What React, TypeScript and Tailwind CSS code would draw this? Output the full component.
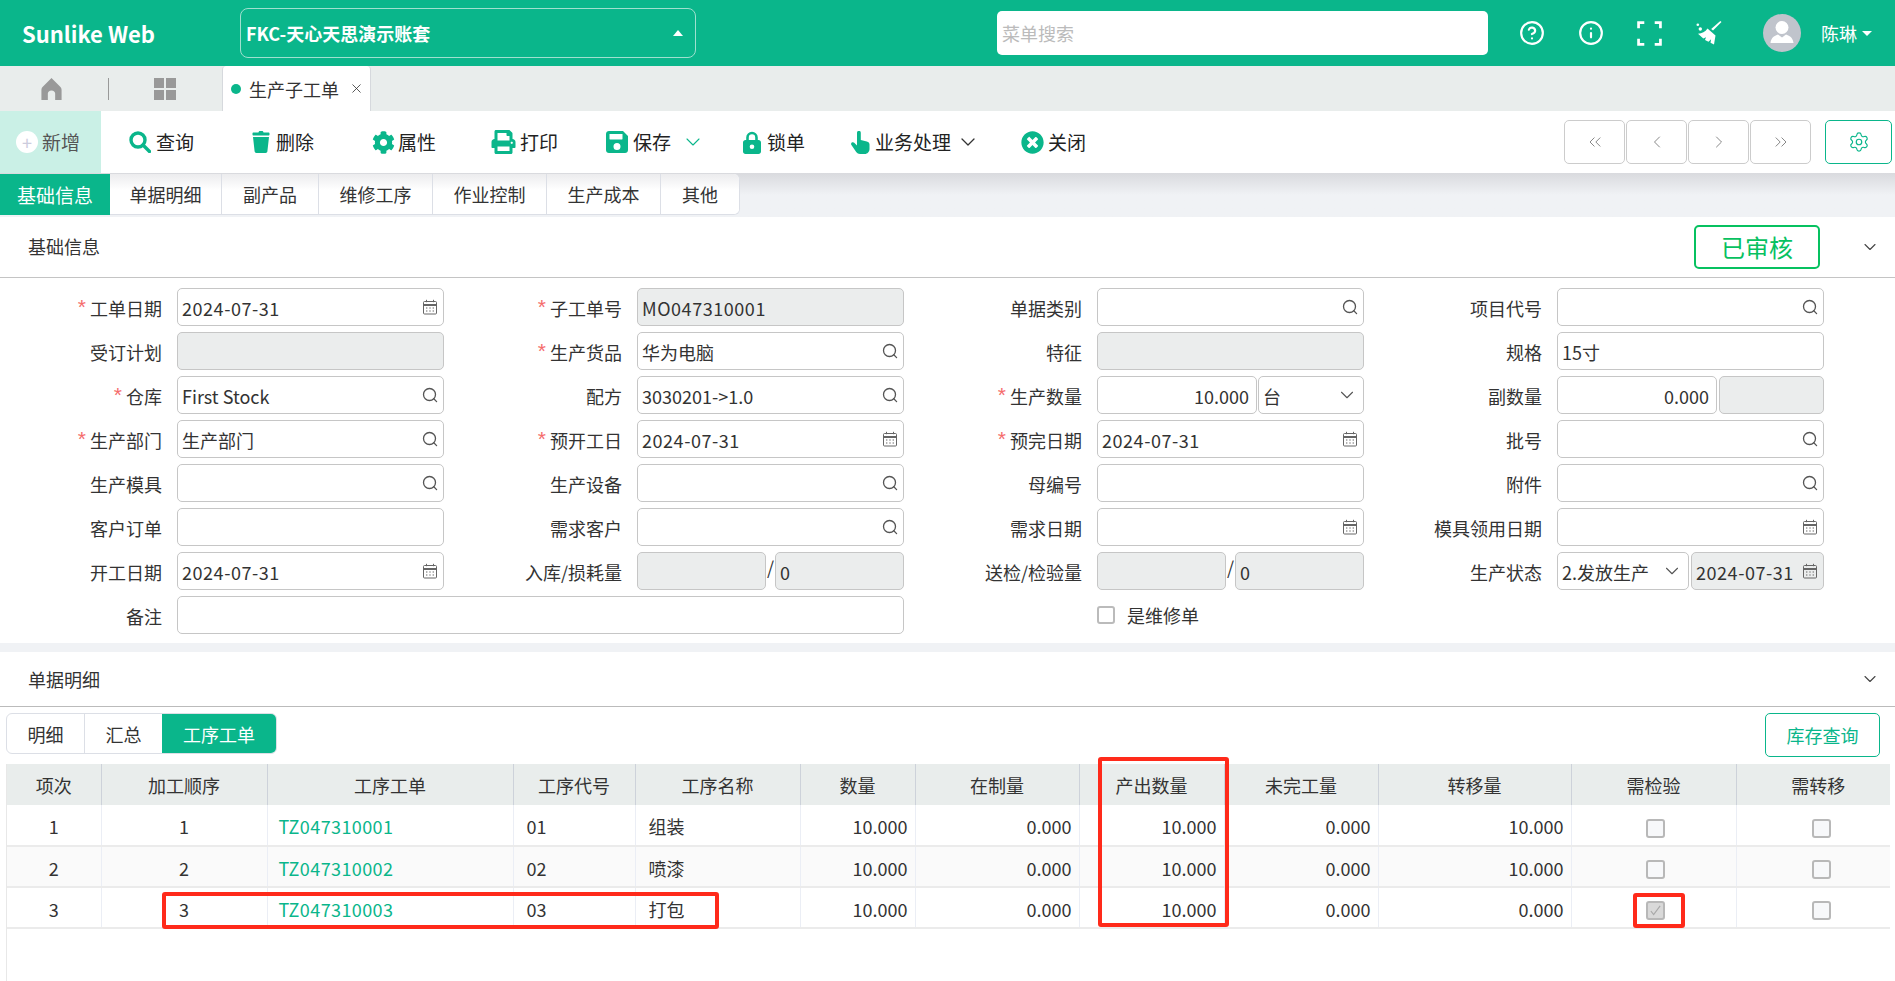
import type { ReactNode } from "react";
import { ChevronDown, ChevronLeft, ChevronRight, ChevronsLeft, ChevronsRight, CircleHelp, Info, Settings, X } from "lucide-react";
import { FaCog, FaPrint, FaTimesCircle } from "react-icons/fa";

const green = "text-[#0ab68b]";

// dates and codes run a little wider in the reference than the fallback font
const isCode = (v?: string) => !!v && /^(\d{4}-|MO|TZ)/.test(v);

function SearchIcon() {
  return (
    <svg viewBox="0 0 16 16" className="h-[16px] w-[16px] shrink-0 text-[#555]" fill="none" stroke="currentColor" strokeWidth="1.3">
      <circle cx="7.5" cy="7.5" r="6" />
      <path d="M11.8 11.8 14.6 14.6" strokeLinecap="round" />
    </svg>
  );
}

function CalendarIcon() {
  return (
    <svg viewBox="0 0 16 16" className="h-[16px] w-[16px] shrink-0 text-[#666]" fill="none" stroke="currentColor" strokeWidth="1">
      <rect x="1.5" y="2.5" width="13" height="12.5" rx="1" />
      <path d="M1.5 6h13" strokeWidth="2" />
      <path d="M4.5 .8v2.4M11.5 .8v2.4" />
      <path d="M4 9h1.4M7.3 9h1.4M10.6 9h1.4M4 12h1.4M7.3 12h1.4M10.6 12h1.4" />
    </svg>
  );
}

function Box({
  value,
  icon,
  disabled,
  right,
  width = "w-[267px]",
}: {
  value?: string;
  icon?: "search" | "date" | "select";
  disabled?: boolean;
  right?: boolean;
  width?: string;
}) {
  return (
    <div
      className={`flex h-[38px] shrink-0 items-center overflow-hidden rounded-[5px] border-[1.5px] border-[#c6c6c6] pl-[4px] pr-[5px] ${width} ${
        disabled ? "bg-[#ebeded]" : "bg-white"
      }`}
    >
      <span
        className={`min-w-0 flex-1 overflow-hidden whitespace-nowrap pt-[2px] text-[#333] ${right ? "pr-[2px] text-right" : ""} ${
          isCode(value) ? "tracking-[0.55px]" : ""
        }`}
      >
        {value}
      </span>
      {icon === "search" && <SearchIcon />}
      {icon === "date" && <CalendarIcon />}
      {icon === "select" && <ChevronDown className="ml-1 h-[22px] w-[22px] shrink-0 text-[#555]" strokeWidth={1.2} />}
    </div>
  );
}

function Field({ label, required, children }: { label: string; required?: boolean; children: ReactNode }) {
  return (
    <div className="flex h-[38px] items-center">
      <div className="w-[162px] shrink-0 whitespace-nowrap pt-[2px] text-right text-[#333]">
        {required && <span className="mr-[4px] inline-block align-top text-[21px] leading-[24px] text-[#f56c6c] [font-family:'Liberation_Sans',sans-serif]">*</span>}
        {label}
      </div>
      <div className="ml-[15px] flex items-center">{children}</div>
    </div>
  );
}

function Split({ a, b }: { a: ReactNode; b: ReactNode }) {
  return <div className="flex w-[267px] items-center justify-between">{a}{b}</div>;
}

function Slashed() {
  return (
    <div className="flex w-[267px] items-center justify-between">
      <Box disabled width="w-[129px]" />
      <span className="-mt-[8px] text-[#333]">/</span>
      <Box disabled value="0" width="w-[129px]" />
    </div>
  );
}

function TrashIcon() {
  return (
    <svg viewBox="0 0 18 22" className="h-[22px] w-[18px] fill-[#0ab68b]">
      <path d="M6.500 1.500C6.500.6 7.200 0 8 0h2c.8 0 1.500.6 1.500 1.500h5c.6 0 1 .4 1 1v1c0 .6-.4 1-1 1h-15c-.6 0-1-.4-1-1v-1c0-.6.4-1 1-1z" />
      <path d="M1 6h16l-1.600 14.300c-.1.9-.8 1.700-1.800 1.700H4.400c-1 0-1.700-.8-1.800-1.700z" />
    </svg>
  );
}

function SearchBold() {
  return (
    <svg viewBox="0 0 22 22" className="h-[22px] w-[22px]" fill="none" stroke="#0ab68b">
      <circle cx="9" cy="9" r="7" strokeWidth="3.4" />
      <path d="M14 14l6.500 6.500" strokeWidth="3.4" strokeLinecap="round" />
    </svg>
  );
}

function SaveIcon() {
  return (
    <svg viewBox="0 0 22 22" className="h-[22px] w-[22px]">
      <path
        fillRule="evenodd"
        fill="#0ab68b"
        d="M3 0h14l5 5v14c0 1.700-1.300 3-3 3H3c-1.700 0-3-1.300-3-3V3c0-1.700 1.300-3 3-3zm.5 3v5c0 .3.200.5.500.500h12c.3 0 .5-.2.5-.5V3zM11 12a3.500 3.500 0 1 0 0 7 3.500 3.500 0 0 0 0-7z"
      />
    </svg>
  );
}

function LockIcon() {
  return (
    <svg viewBox="0 0 18 23" className="h-[23px] w-[18px]">
      <path d="M4.500 10V6.500a4.500 4.500 0 0 1 9 0V10" fill="none" stroke="#0ab68b" strokeWidth="2.6" />
      <path
        fillRule="evenodd"
        fill="#0ab68b"
        d="M2.500 9h13c1.400 0 2.500 1.100 2.500 2.500v9c0 1.400-1.100 2.500-2.500 2.500h-13C1.100 23 0 21.900 0 20.500v-9C0 10.100 1.100 9 2.500 9zM9 13.500a2.300 2.300 0 1 0 0 4.600 2.300 2.300 0 0 0 0-4.600z"
      />
    </svg>
  );
}

function HandIcon() {
  return (
    <svg viewBox="0 0 19 23" className="h-[23px] w-[19px] fill-[#0ab68b]">
      <path d="M6 1.800a1.900 1.900 0 0 1 3.800 0V9l6 1.500c1.700.4 2.700 1.500 2.700 3V18c0 2.700-2.100 5-4.700 5H9c-1.500 0-2.900-.7-3.800-1.900L.6 14.300c-.8-1-.6-2.100.2-2.700s2-.4 2.700.4L6 14.500z" />
    </svg>
  );
}

function BroomIcon() {
  return (
    <svg viewBox="0 0 26 24" className="h-[24px] w-[26px] fill-white">
      <path d="M25.500 1 17 9.500l-1.800-1.600L24.300 0z" />
      <path d="M11.500 7.500 19.500 14.500 18 23.500l-3.500-1.800.6-3.500-2.600 2.600L9 19l1-2.700-2.700 1.300L2 12.800c4-.2 7.300-2 9.500-5.300z" />
      <circle cx="1.800" cy="3.800" r="1.300" />
      <circle cx="4.300" cy="8" r="1.700" />
    </svg>
  );
}

const tools = [
  { label: "查询", w: "w-[123px]", gap: "gap-[5px]", icon: <SearchBold /> },
  { label: "删除", w: "w-[120px]", gap: "gap-[6px]", icon: <TrashIcon /> },
  { label: "属性", w: "w-[119px]", gap: "gap-[3px]", icon: <FaCog className="h-[23px] w-[23px] text-[#0ab68b]" /> },
  { label: "打印", w: "w-[115px]", gap: "gap-[4px]", icon: <FaPrint className="h-[24px] w-[25px] text-[#0ab68b]" /> },
  {
    label: "保存",
    w: "w-[137px]",
    gap: "gap-[5px]",
    icon: <SaveIcon />,
    caret: <ChevronDown className="ml-[5px] h-[24px] w-[24px] text-[#0ab68b]" strokeWidth={1.1} />,
  },
  { label: "锁单", w: "w-[108px]", gap: "gap-[6px]", icon: <LockIcon /> },
  {
    label: "业务处理",
    w: "w-[170px]",
    gap: "gap-[5px]",
    icon: <HandIcon />,
    caret: <ChevronDown className="h-[24px] w-[24px] text-[#333]" strokeWidth={1.3} />,
  },
  { label: "关闭", w: "w-[80px]", gap: "gap-[4px]", icon: <FaTimesCircle className="h-[23px] w-[23px] text-[#0ab68b]" /> },
];

const pageTabs = [
  { label: "单据明细", w: "w-[112px]" },
  { label: "副产品", w: "w-[97px]" },
  { label: "维修工序", w: "w-[114px]" },
  { label: "作业控制", w: "w-[114px]" },
  { label: "生产成本", w: "w-[114px]" },
  { label: "其他", w: "w-[78px]" },
];

const columns = [
  { label: "项次", w: "w-[94px]" },
  { label: "加工顺序", w: "w-[166px]" },
  { label: "工序工单", w: "w-[246px]" },
  { label: "工序代号", w: "w-[122px]" },
  { label: "工序名称", w: "w-[165px]" },
  { label: "数量", w: "w-[115px]" },
  { label: "在制量", w: "w-[164px]" },
  { label: "产出数量", w: "w-[145px]" },
  { label: "未完工量", w: "w-[154px]" },
  { label: "转移量", w: "w-[193px]" },
  { label: "需检验", w: "w-[165px]" },
  { label: "需转移", w: "w-[154px]" },
];

const rows = [
  { no: "1", order: "TZ047310001", code: "01", name: "组装", moved: "10.000" },
  { no: "2", order: "TZ047310002", code: "02", name: "喷漆", moved: "10.000" },
  { no: "3", order: "TZ047310003", code: "03", name: "打包", moved: "0.000", checked: true },
];

function Check({ checked }: { checked?: boolean }) {
  return (
    <span
      className={`inline-flex h-[19px] w-[19px] items-center justify-center rounded-[3px] border-2 border-[#b8b8b8] align-middle ${
        checked ? "bg-[#d9d9d9]" : "bg-[#f7f8fa]"
      }`}
    >
      {checked && (
        <svg viewBox="0 0 14 14" className="h-[13px] w-[13px]" fill="none" stroke="#a8a8a8" strokeWidth="1.2">
          <path d="M2 7.500l3 4L12 2" />
        </svg>
      )}
    </span>
  );
}

function RedBox({ className }: { className: string }) {
  return <div className={`absolute rounded-[3px] border-[4px] border-[#ff2a1a] ${className}`} />;
}

export default function App() {
  return (
    <div className="relative h-[981px] w-full overflow-hidden bg-white [font-family:'Noto_Sans_CJK_SC','Liberation_Sans',sans-serif] text-[18px] leading-[26px]">
      <header className="flex h-[66px] items-center bg-[#0ab68b] text-white">
        <div className="w-[240px] pl-[22px] text-[22px] font-bold">Sunlike Web</div>
        <div className="flex h-[50px] w-[456px] items-center justify-between rounded-[8px] border border-[#9fe0cf] pl-[5px] pr-[12px] font-bold">
          <span>FKC-天心天思演示账套</span>
          <span className="h-0 w-0 border-x-[5px] border-b-[6px] border-x-transparent border-b-white" />
        </div>
        <div className="ml-[301px] flex h-[44px] w-[491px] items-center rounded-[5px] bg-white pl-[5px] text-[#bbb]">菜单搜索</div>
        <CircleHelp className="ml-[31px] h-[26px] w-[26px]" strokeWidth={2} />
        <Info className="ml-[33px] h-[26px] w-[26px]" strokeWidth={2} />
        <svg viewBox="0 0 24 24" className="ml-[33px] h-[25px] w-[25px]" fill="none" stroke="white" strokeWidth="2.6">
          <path d="M1.500 7V1.500H7M17 1.500h5.500V7M22.500 17v5.500H17M7 22.500H1.500V17" />
        </svg>
        <div className="ml-[34px]"><BroomIcon /></div>
        <div className="ml-[41px] h-[38px] w-[38px] rounded-full bg-[#c0c4cc]">
          <svg viewBox="0 0 38 38" className="h-[38px] w-[38px] fill-white">
            <circle cx="19" cy="13.500" r="6.500" />
            <path d="M7.500 29c.4-4 2.500-7 7.500-8.500l4 3 4-3c5 1.500 7.100 4.500 7.500 8.500z" />
          </svg>
        </div>
        <span className="ml-[20px]">陈琳</span>
        <span className="ml-[5px] h-0 w-0 border-x-[5px] border-t-[5px] border-x-transparent border-t-white" />
      </header>

      <div className="flex h-[45px] bg-[#e9edec]">
        <div className="flex w-[222px] items-center">
          <svg viewBox="0 0 22 24" className="ml-[41px] h-[22px] w-[21px] fill-[#999]">
            <path d="M11 0 20 9c1 1 2 2 2 4v11h-7v-7c0-2-1.500-3.500-4-3.500S7 15 7 17v7H0V13c0-2 1-3 2-4z" />
          </svg>
          <span className="ml-[46px] h-[22px] w-px bg-[#999]" />
          <div className="ml-[45px] grid h-[22px] w-[22px] grid-cols-2 gap-[2px]">
            <span className="bg-[#999]" />
            <span className="bg-[#999]" />
            <span className="bg-[#999]" />
            <span className="bg-[#999]" />
          </div>
        </div>
        <div className="flex w-[149px] items-center rounded-t-[4px] border-x border-[#d6d9dd] bg-white pl-[8px] text-[#333]">
          <span className="h-[10px] w-[10px] rounded-full bg-[#0ab68b]" />
          <span className="ml-[8px] whitespace-nowrap">生产子工单</span>
          <X className="ml-[10px] h-[15px] w-[15px]" strokeWidth={1.3} />
        </div>
      </div>

      <div className="flex h-[62px] items-center bg-white text-[19px] text-[#222]">
        <div className="flex h-full w-[101px] items-center bg-[#caf0e6] pl-[16px] text-[#555]">
          <span className="flex h-[22px] w-[22px] items-center justify-center rounded-full bg-white text-[#ccd]">
            <span className="text-[18px] leading-none">+</span>
          </span>
          <span className="ml-[4px]">新增</span>
        </div>
        <div className="flex pl-[28px]">
          {tools.map((t) => (
            <div key={t.label} className={`flex items-center ${t.w} ${t.gap}`}>
              {t.icon}
              <span className="whitespace-nowrap">{t.label}</span>
              {t.caret}
            </div>
          ))}
        </div>
        <div className="ml-auto flex items-center pr-[3px]">
          {[ChevronsLeft, ChevronLeft, ChevronRight, ChevronsRight].map((Icon, i) => (
            <div key={i} className="mr-[1px] flex h-[44px] w-[61px] items-center justify-center rounded-[5px] border border-[#ccc]">
              <Icon className="h-[20px] w-[20px] text-[#888]" strokeWidth={1.2} />
            </div>
          ))}
          <div className="ml-[13px] flex h-[44px] w-[67px] items-center justify-center rounded-[5px] border border-[#0ab68b]">
            <Settings className="h-[22px] w-[22px] text-[#0ab68b]" strokeWidth={1.3} />
          </div>
        </div>
      </div>

      <div className="flex h-[44px] items-start bg-gradient-to-b from-[#d9dade] from-0% to-[#f0f2f5] to-50% pt-px">
        <div className="flex h-[41px] w-[110px] items-center justify-center bg-[#0ab68b] text-[19px] text-white">基础信息</div>
        <div className="flex overflow-hidden rounded-br-[6px] rounded-tr-[6px] border-b border-r border-[#dcdfe6] bg-white text-[#333]">
          {pageTabs.map((t) => (
            <div
              key={t.label}
              className={`flex h-[40px] items-center justify-center border-r border-[#dcdfe6] bg-gradient-to-b from-[#ececee] to-white to-40% last:border-r-0 ${t.w}`}
            >
              {t.label}
            </div>
          ))}
        </div>
      </div>

      <section className="h-[426px] bg-white text-[#333]">
        <div className="flex h-[61px] items-center border-b border-[#c4c4c4] pl-[28px]">
          <span className="mb-[2px]">基础信息</span>
          <div className="ml-auto mr-[40px] flex h-[44px] w-[126px] items-center justify-center rounded-[5px] border-2 border-[#07c160] text-[24px] text-[#07c160]">
            已审核
          </div>
          <ChevronDown className="mr-[15px] h-[20px] w-[20px] text-[#444]" strokeWidth={1.3} />
        </div>
        <div className="grid grid-cols-[repeat(4,460px)] gap-y-[6px] pt-[10px]">
          <Field label="工单日期" required><Box value="2024-07-31" icon="date" /></Field>
          <Field label="子工单号" required><Box value="MO047310001" disabled /></Field>
          <Field label="单据类别"><Box icon="search" /></Field>
          <Field label="项目代号"><Box icon="search" /></Field>

          <Field label="受订计划"><Box disabled /></Field>
          <Field label="生产货品" required><Box value="华为电脑" icon="search" /></Field>
          <Field label="特征"><Box disabled /></Field>
          <Field label="规格"><Box value="15寸" /></Field>

          <Field label="仓库" required><Box value="First Stock" icon="search" /></Field>
          <Field label="配方"><Box value="3030201->1.0" icon="search" /></Field>
          <Field label="生产数量" required>
            <Split a={<Box value="10.000" right width="w-[160px]" />} b={<Box value="台" icon="select" width="w-[106px]" />} />
          </Field>
          <Field label="副数量">
            <Split a={<Box value="0.000" right width="w-[160px]" />} b={<Box disabled width="w-[105px]" />} />
          </Field>

          <Field label="生产部门" required><Box value="生产部门" icon="search" /></Field>
          <Field label="预开工日" required><Box value="2024-07-31" icon="date" /></Field>
          <Field label="预完日期" required><Box value="2024-07-31" icon="date" /></Field>
          <Field label="批号"><Box icon="search" /></Field>

          <Field label="生产模具"><Box icon="search" /></Field>
          <Field label="生产设备"><Box icon="search" /></Field>
          <Field label="母编号"><Box /></Field>
          <Field label="附件"><Box icon="search" /></Field>

          <Field label="客户订单"><Box /></Field>
          <Field label="需求客户"><Box icon="search" /></Field>
          <Field label="需求日期"><Box icon="date" /></Field>
          <Field label="模具领用日期"><Box icon="date" /></Field>

          <Field label="开工日期"><Box value="2024-07-31" icon="date" /></Field>
          <Field label="入库/损耗量"><Slashed /></Field>
          <Field label="送检/检验量"><Slashed /></Field>
          <Field label="生产状态">
            <Split a={<Box value="2.发放生产" icon="select" width="w-[132px]" />} b={<Box value="2024-07-31" icon="date" disabled width="w-[133px]" />} />
          </Field>

          <div className="col-span-2">
            <Field label="备注"><Box width="w-[727px]" /></Field>
          </div>
          <div className="col-span-2 flex h-[38px] items-center pl-[177px]">
            <span className="h-[18px] w-[18px] rounded-[3px] border-2 border-[#bbb] bg-white" />
            <span className="ml-[12px]">是维修单</span>
          </div>
        </div>
      </section>

      <div className="h-[9px] bg-[#f0f2f5]" />

      <section className="bg-white text-[#333]">
        <div className="flex h-[55px] items-center border-b border-[#bbb] pl-[28px]">
          <span>单据明细</span>
          <ChevronDown className="ml-auto mr-[15px] h-[20px] w-[20px] text-[#444]" strokeWidth={1.3} />
        </div>
        <div className="flex h-[57px] items-start pl-[6px] pr-[15px] pt-[6px]">
          <div className="flex h-[41px] overflow-hidden rounded-[6px] border border-[#dcdfe6]">
            <div className="flex w-[78px] items-center justify-center border-r border-[#dcdfe6]">明细</div>
            <div className="flex w-[77px] items-center justify-center">汇总</div>
            <div className="flex w-[114px] items-center justify-center bg-[#0ab68b] text-white">工序工单</div>
          </div>
          <div className={`ml-auto flex h-[44px] w-[115px] items-center justify-center rounded-[5px] border border-[#0ab68b] ${green}`}>库存查询</div>
        </div>
        <div className="ml-[6px] h-[217px] w-[1885px] border-l border-[#e8e8e8]">
          <table className="w-[1883px] table-fixed border-collapse">
            <colgroup>
              {columns.map((c) => (
                <col key={c.label} className={c.w} />
              ))}
            </colgroup>
            <thead>
              <tr className="h-[41px] bg-[#e9edec]">
                {columns.map((c) => (
                  <th key={c.label} className="border-r border-[#cdd2da] text-center font-normal last:border-r-0 last:pl-[10px]">
                    {c.label}
                  </th>
                ))}
              </tr>
            </thead>
            <tbody>
              {rows.map((r, i) => (
                <tr key={r.no} className={`h-[41px] border-b-2 border-[#ebebeb] ${i === 1 ? "bg-[#fafafa]" : "bg-white"}`}>
                  <td className="border-r border-[#ebeef5] pt-[2px] text-center">{r.no}</td>
                  <td className="border-r border-[#ebeef5] pt-[2px] text-center">{r.no}</td>
                  <td className={`border-r border-[#ebeef5] pl-[11px] pt-[2px] tracking-[0.4px] ${green}`}>{r.order}</td>
                  <td className="border-r border-[#ebeef5] pl-[13px] pt-[2px]">{r.code}</td>
                  <td className="border-r border-[#ebeef5] pl-[13px] pt-[2px]">{r.name}</td>
                  <td className="border-r border-[#ebeef5] pr-[7px] pt-[2px] text-right">10.000</td>
                  <td className="border-r border-[#ebeef5] pr-[7px] pt-[2px] text-right">0.000</td>
                  <td className="border-r border-[#ebeef5] pr-[7px] pt-[2px] text-right">10.000</td>
                  <td className="border-r border-[#ebeef5] pr-[7px] pt-[2px] text-right">0.000</td>
                  <td className="border-r border-[#ebeef5] pr-[7px] pt-[2px] text-right">{r.moved}</td>
                  <td className="border-r border-[#ebeef5] pl-[4px] text-center"><Check checked={r.checked} /></td>
                  <td className="pl-[16px] text-center"><Check /></td>
                </tr>
              ))}
            </tbody>
          </table>
        </div>
      </section>

      <RedBox className="left-[162px] top-[892px] h-[37px] w-[557px]" />
      <RedBox className="left-[1098px] top-[757px] h-[170px] w-[131px]" />
      <RedBox className="left-[1633px] top-[893px] h-[35px] w-[52px]" />
    </div>
  );
}
